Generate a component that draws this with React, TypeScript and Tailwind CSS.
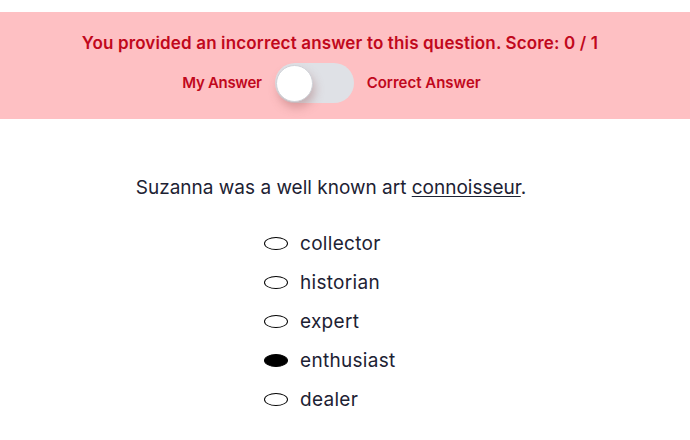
import React from 'react'

const options = ['collector', 'historian', 'expert', 'enthusiast', 'dealer']

const App = () => {
  return (
    <div className="w-[690px] h-[440px] bg-white pt-3 font-['Inter',sans-serif]">
      {/* result banner */}
      <div className="bg-[#fec0c3] h-[107px] flex flex-col items-center pt-[21px] pr-[10px]">
        <p className="text-[#c1081c] font-semibold text-[17px] leading-5 tracking-[0.15px]">
          You provided an incorrect answer to this question. Score: 0 / 1
        </p>
        <div className="flex items-center gap-[13px] mt-[10px] mr-[17px] text-[#c1081c] font-semibold text-[15px]">
          <span className="tracking-[-0.3px]">My Answer</span>
          <div className="w-[79px] h-[40px] rounded-full bg-[#dfe1e6] p-[1.5px] flex items-center">
            <div className="w-[37px] h-[37px] rounded-full bg-white border border-[#cfd2d8] shadow-[2px_6px_10px_rgba(150,80,80,0.35)]" />
          </div>
          <span>Correct Answer</span>
        </div>
      </div>

      {/* question */}
      <div className="flex flex-col mt-[57px]">
        <p className="text-[#1d2233] text-[19px] leading-6 text-center pr-[28px]">
          Suzanna was a well known art <span className="underline underline-offset-2">connoisseur</span>.
        </p>
        <ul className="mt-[32px] flex flex-col gap-[15px] ml-[264px]">
          {options.map((o) => (
            <li key={o} className="flex items-center gap-3 h-6 text-[#1d2233] text-[19px] tracking-[0.3px]">
              <span
                className={
                  o === 'enthusiast'
                    ? 'w-6 h-[13px] -mt-[2px] rounded-[50%] bg-black border-[1.5px] border-black'
                    : 'w-6 h-[13px] -mt-[2px] rounded-[50%] border-[1.5px] border-black'
                }
              />
              <span>{o}</span>
            </li>
          ))}
        </ul>
      </div>
    </div>
  )
}

export default App
